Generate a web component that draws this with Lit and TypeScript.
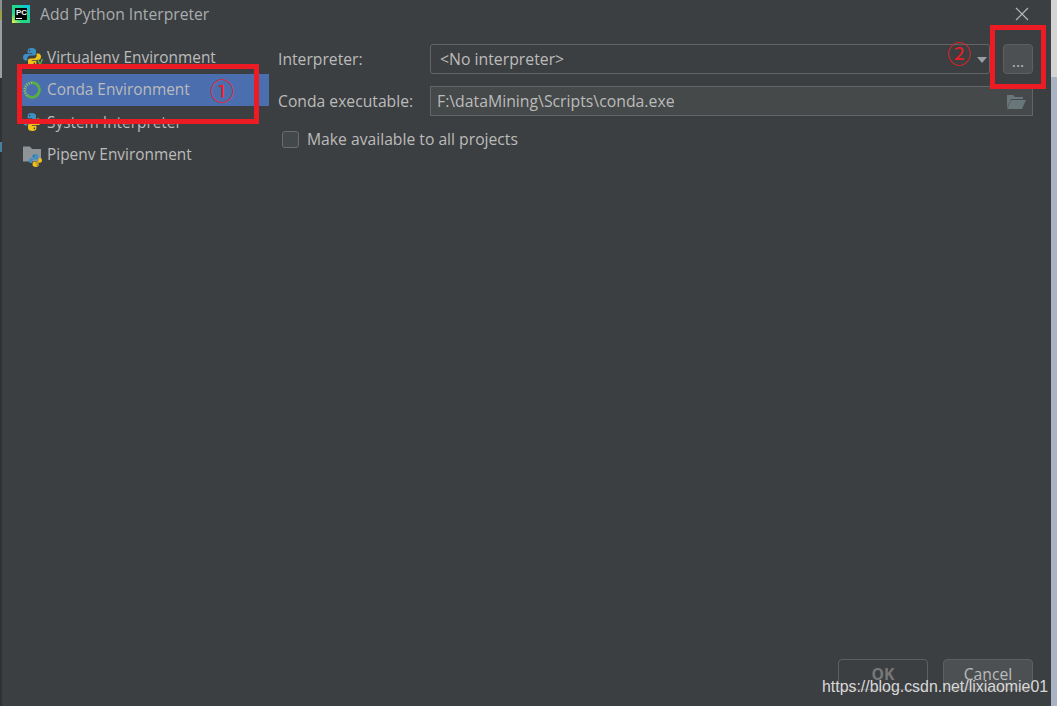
import {css, html, svg, LitElement} from 'lit';
import {customElement} from 'lit/decorators.js';

const python = (small = false) => html`
    <svg class="${small ? 'py-small' : 'py'}" viewBox="0 0 18 18">
        <path d="M8.8 0C5.6 0 4.6 1.2 4.6 3v2.2h4.6V6H2.8C1 6 0 7.4 0 9.2s1 3.4 2.8 3.4h1.6v-2.2c0-1.6 1.3-2.8 3-2.8h3.4c1.3 0 2.2-1 2.2-2.2V3c0-1.8-1.6-3-4.2-3z" fill="#3d8fc4"/>
        <circle cx="6.6" cy="2.6" r=".8" fill="#3c3f41"/>
        <path d="M13.6 5.6V7.8c0 1.6-1.3 2.8-3 2.8H7.2C5.9 10.6 5 11.600 5 12.800V15c0 1.800 1.600 3 4.200 3 3.200 0 4.200-1.200 4.200-3v-2.200H8.800V12h6.400c1.800 0 2.800-1.400 2.800-3.200s-1-3.200-2.800-3.200z" fill="#f2c21a"/>
        <circle cx="11.400" cy="15.400" r=".8" fill="#3c3f41"/>
    </svg>
`;

// solid lower right, speckled upper left
const conda = svg`
    <path d="M4.200 14.400A7.300 7.300 0 1 0 9 1.700" fill="none" stroke="#5aad45" stroke-width="2.800"/>
    <path d="M9 1.700A7.300 7.300 0 0 0 4.200 14.400" fill="none" stroke="#7cc06a" stroke-width="2.800" stroke-dasharray="1.300 1"/>
`;

@customElement('app-root')
class AppRoot extends LitElement {
    static styles = css`
        :host {
            display: flex;
            position: relative;
            height: 706px;
            overflow: hidden;
            background: #3c3f41;
            color: #bbbbbb;
            font-family: "Open Sans", "Noto Sans", sans-serif;
            font-size: 15.700px;
        }

        .edge-left {
            width: 2px;
            flex: none;
            background: linear-gradient(#8d8f8f 0, #8d8f8f 10px, #9aa04a 10px, #9aa04a 20px, #9c9e9f 20px, #9c9e9f 78px,
                #2e3233 78px, #2e3233 142px, #4a7f9c 142px, #4a7f9c 152px, #2e3233 152px);
        }

        .edge-right {
            width: 6px;
            flex: none;
            background: linear-gradient(#d4d4d4 0, #d4d4d4 77px, #aab3c4 77px);
        }

        .dialog {
            flex: 1;
            min-width: 0;
            display: flex;
            flex-direction: column;
        }

        .title {
            display: flex;
            align-items: center;
            height: 28px;
            padding-left: 10px;
            color: #a9adb0;
        }

        .logo {
            display: flex;
            width: 18px;
            height: 18px;
            margin-right: 10px;
            margin-top: -1px;
            padding: 3px;
            box-sizing: border-box;
            background: linear-gradient(45deg, #fcf84a 0%, #21d789 30%, #21d789 55%, #07c3f2 100%);
        }

        .logo div {
            flex: 1;
            position: relative;
            background: #000;
            color: #fff;
            font: bold 8px/9px "Liberation Sans", sans-serif;
            padding-left: 1px;
        }

        .logo div::after {
            content: "";
            position: absolute;
            left: 1px;
            bottom: 1px;
            width: 6px;
            height: 1px;
            background: #fff;
        }

        .close {
            width: 14px;
            height: 14px;
            margin-left: auto;
            margin-right: 22px;
        }

        .body {
            display: flex;
            flex: 1;
        }

        .sidebar {
            width: 247px;
            margin-left: 20px;
            padding-top: 13px;
            flex: none;
            font-size: 15.400px;
        }

        .row {
            display: flex;
            align-items: center;
            height: 32.500px;
            gap: 6px;
            white-space: nowrap;
        }

        .row.selected {
            background: #4b6eaf;
        }

        .icon {
            position: relative;
            width: 18px;
            height: 18px;
            margin-left: 1px;
            flex: none;
        }

        .py {
            width: 18px;
            height: 18px;
            display: block;
        }

        .py-small {
            position: absolute;
            right: -1px;
            bottom: -3px;
            width: 13px;
            height: 13px;
        }

        .venv {
            position: absolute;
            right: -2px;
            bottom: -1px;
            color: #62b543;
            font: bold 9px/9px "Liberation Sans", sans-serif;
        }

        .folder {
            display: block;
            width: 18px;
            height: 16px;
        }

        .main {
            flex: 1;
            padding: 16px 18px 0 9px;
            font-size: 15.800px;
        }

        .form {
            display: grid;
            grid-template-columns: 152px 1fr;
            row-gap: 12px;
            align-items: center;
        }

        .label {
            font-size: 15.700px;
        }

        .combo-line {
            display: flex;
            gap: 13px;
        }

        .combo {
            flex: 1;
            display: flex;
            align-items: center;
            justify-content: space-between;
            height: 30px;
            box-sizing: border-box;
            padding: 0 2px 0 9px;
            border: 1px solid #646464;
            border-radius: 3px;
        }

        .arrow {
            width: 0;
            height: 0;
            border-left: 5.500px solid transparent;
            border-right: 5.500px solid transparent;
            border-top: 6px solid #9a9da1;
            margin-top: 1px;
        }

        .dots {
            width: 30px;
            height: 30px;
            box-sizing: border-box;
            border: 1px solid #5e6060;
            border-radius: 4px;
            background: #4c5052;
            text-align: center;
            line-height: 32px;
        }

        .field {
            display: flex;
            align-items: center;
            justify-content: space-between;
            height: 30px;
            box-sizing: border-box;
            padding: 0 6px 0 6px;
            border: 1px solid #646464;
            background: #45494a;
        }

        .field svg {
            width: 19px;
            height: 15px;
        }

        .check {
            display: flex;
            align-items: center;
            gap: 8px;
            margin: 12px 0 0 4px;
            font-size: 15.700px;
        }

        .box {
            width: 17px;
            height: 17px;
            box-sizing: border-box;
            border: 1px solid #6b6b6b;
            border-radius: 3px;
            background: #43494a;
        }

        .footer {
            display: flex;
            justify-content: flex-end;
            gap: 15px;
            padding: 0 18px 16px 0;
        }

        .btn {
            width: 90px;
            height: 31px;
            box-sizing: border-box;
            border: 1px solid #5e6060;
            border-radius: 4px;
            text-align: center;
            line-height: 29px;
        }

        .btn.ok {
            color: #777777;
            font-weight: 700;
        }

        .btn.cancel {
            background: #4c5052;
        }

        .mark {
            position: absolute;
            box-sizing: border-box;
            border: 5px solid #ed1c24;
        }

        .mark.one {
            left: 17px;
            top: 64px;
            width: 242px;
            height: 60px;
        }

        .mark.two {
            left: 990px;
            top: 25px;
            width: 56px;
            height: 64px;
        }

        .num {
            position: absolute;
            color: #ed1c24;
            font: 24px/24px "Noto Sans CJK SC", "DejaVu Sans", serif;
        }

        .num.one {
            left: 210px;
            top: 78px;
        }

        .num.two {
            left: 947px;
            top: 41px;
        }

        .watermark {
            position: absolute;
            left: 822px;
            top: 678px;
            color: #d8d8d8;
            font: 15.900px/18px "Liberation Sans", sans-serif;
            white-space: nowrap;
        }
    `;

    render() {
        return html`
            <div class="edge-left"></div>
            <div class="dialog">
                <div class="title">
                    <div class="logo"><div>PC</div></div>
                    Add Python Interpreter
                    <svg class="close" viewBox="0 0 14 14"><path d="M1 1l12 12M13 1L1 13" stroke="#b5b8ba" stroke-width="1.200" fill="none"/></svg>
                </div>
                <div class="body">
                    <div class="sidebar">
                        <div class="row">
                            <div class="icon">${python()}<span class="venv">V</span></div>
                            Virtualenv Environment
                        </div>
                        <div class="row selected">
                            <div class="icon"><svg class="py" viewBox="0 0 18 18">${conda}</svg></div>
                            Conda Environment
                        </div>
                        <div class="row">
                            <div class="icon">${python()}</div>
                            System Interpreter
                        </div>
                        <div class="row">
                            <div class="icon">
                                <svg class="folder" viewBox="0 0 18 15"><path d="M0 0h7l2 2.500h9V15H0z" fill="#8f9498"/></svg>
                                ${python(true)}
                            </div>
                            Pipenv Environment
                        </div>
                    </div>
                    <div class="main">
                        <div class="form">
                            <span class="label">Interpreter:</span>
                            <div class="combo-line">
                                <div class="combo">&lt;No interpreter&gt;<span class="arrow"></span></div>
                                <div class="dots">...</div>
                            </div>
                            <span class="label">Conda executable:</span>
                            <div class="field">
                                F:\\dataMining\\Scripts\\conda.exe
                                <svg viewBox="0 0 19 15">
                                    <path d="M0 14V1h6l2 2h8v2H4z" fill="#69767a"/>
                                    <path d="M4 6h15l-4 9H0z" fill="#69767a"/>
                                </svg>
                            </div>
                        </div>
                        <div class="check"><span class="box"></span>Make available to all projects</div>
                    </div>
                </div>
                <div class="footer">
                    <div class="btn ok">OK</div>
                    <div class="btn cancel">Cancel</div>
                </div>
            </div>
            <div class="edge-right"></div>
            <div class="mark one"></div>
            <div class="mark two"></div>
            <span class="num one">①</span>
            <span class="num two">②</span>
            <span class="watermark">https://blog.csdn.net/lixiaomie01</span>
        `;
    }
}
